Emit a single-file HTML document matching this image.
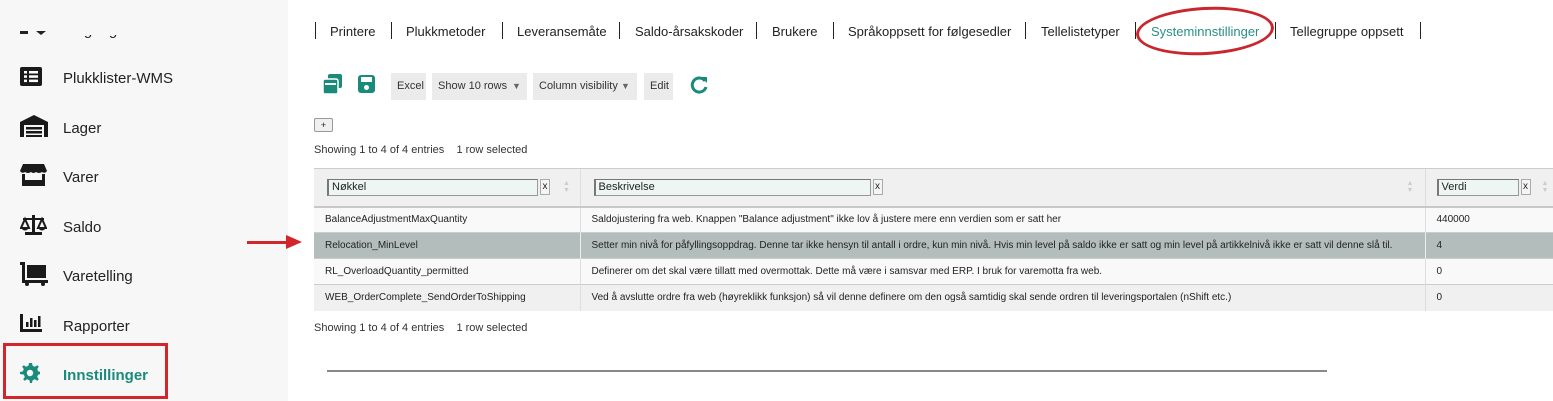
<!DOCTYPE html>
<html><head><meta charset="utf-8"><style>
*{margin:0;padding:0;box-sizing:border-box}
body{width:1553px;height:401px;background:#fff;font-family:"Liberation Sans","DejaVu Sans",sans-serif;position:relative;overflow:hidden;color:#222}
.side{position:absolute;left:0;top:0;width:288px;height:401px;background:#f7f7f7}
.it{position:absolute;left:63px;font-size:15px;color:#222}
.ic{position:absolute;left:20px}
.nav{position:absolute;top:24px;font-size:13px;left:0;width:1553px;height:16px}
.nav span{position:absolute;top:0}
.sep{position:absolute;top:22px;width:1px;height:17px;background:#222}
.btn{position:absolute;top:73px;height:27px;background:#ebebeb;font-size:11px;line-height:27px;padding-left:6px;color:#333}
.tri{position:absolute;top:0;font-size:9px;color:#666}
.small{position:absolute;font-size:11px;color:#333}
table{position:absolute;left:314px;top:168px;border-collapse:collapse;font-size:10px;width:1239px}
td{border-left:1px solid #ddd;padding-left:11px;height:26px;color:#222}
td:first-child{border-left:none}
tr.h td{height:38px;background:#f0f0f0;border-bottom:2px solid #c8c8c8;position:relative}
tr.a td{background:#f9f9f9}
tr.b td{background:#f0f0f0}
tr.s td{background:#b3bebc;border-left-color:#eee}
tr td{border-top:1px solid #ccc}
.inp{display:inline-block;height:17px;border:1px solid #999;border-top-color:#777;border-left:2px solid #777;background:#eef6f3;font-size:11px;padding-left:3px;line-height:15px;vertical-align:middle}
.x{display:inline-block;width:10px;height:16px;border:1px solid #aaa;background:#f4f4f4;font-size:10px;text-align:center;line-height:14px;vertical-align:middle;margin-left:2px}
.sort{position:absolute;top:11px;font-size:7px;color:#ccc;line-height:7px}
</style></head><body>
<div class="side">
 <div class="ic" style="top:31px;width:8px;height:3px;background:#222"></div>
 <div class="ic" style="left:36px;top:31px;width:0;height:0;border-left:5px solid transparent;border-right:5px solid transparent;border-top:4px solid #222"></div>
 <div class="it" style="top:22px;clip-path:inset(13px 0 0 0)">Innganger</div>
 <svg class="ic" style="top:67px" width="22" height="19" viewBox="0 0 22 19"><rect x="0" y="0" width="22" height="19" rx="2" fill="#1a1a1a"/><rect x="4" y="4" width="3" height="2.5" fill="#fff"/><rect x="9" y="4" width="9" height="2.5" fill="#fff"/><rect x="4" y="8.3" width="3" height="2.5" fill="#fff"/><rect x="9" y="8.3" width="9" height="2.5" fill="#fff"/><rect x="4" y="12.6" width="3" height="2.5" fill="#fff"/><rect x="9" y="12.6" width="9" height="2.5" fill="#fff"/></svg>
 <div class="it" style="top:70px">Plukklister-WMS</div>
 <svg class="ic" style="top:115px" width="28" height="22" viewBox="0 0 28 22"><path d="M0 7 L14 0 L28 7 V22 H24 V10 H4 V22 H0Z" fill="#1a1a1a"/><rect x="6" y="12" width="16" height="2.5" fill="#1a1a1a"/><rect x="6" y="16" width="16" height="2.5" fill="#1a1a1a"/><rect x="6" y="20" width="16" height="2" fill="#1a1a1a"/></svg>
 <div class="it" style="top:120px">Lager</div>
 <svg class="ic" style="top:164px" width="27" height="22" viewBox="0 0 27 22"><path d="M3 0 H24 L27 7 Q25 10 22 8 Q19 10 16 8 Q13.5 10 11 8 Q8 10 5 8 Q2 10 0 7Z" fill="#1a1a1a"/><path d="M2 10 V22 H25 V10 H22 V16 H5 V10Z" fill="#1a1a1a"/></svg>
 <div class="it" style="top:169px">Varer</div>
 <svg class="ic" style="top:213px" width="27" height="22" viewBox="0 0 27 22"><path d="M12 2 H15 V19 H22 V22 H5 V19 H12Z M3 5 H24 V7 H3Z" fill="#1a1a1a"/><path d="M5 6 L1 15 H9Z M22 6 L18 15 H26Z" fill="none" stroke="#1a1a1a" stroke-width="2"/><path d="M1 15 Q5 20 9 15Z M18 15 Q22 20 26 15Z" fill="#1a1a1a"/></svg>
 <div class="it" style="top:219px">Saldo</div>
 <svg class="ic" style="top:262px" width="28" height="24" viewBox="0 0 28 24"><path d="M0 0 H5 V18 H28 V21 H2 V3 H0Z" fill="#1a1a1a"/><rect x="7" y="3" width="19" height="13" fill="#1a1a1a"/><circle cx="7" cy="22" r="2" fill="#1a1a1a"/><circle cx="23" cy="22" r="2" fill="#1a1a1a"/></svg>
 <div class="it" style="top:268px">Varetelling</div>
 <svg class="ic" style="top:314px" width="22" height="18" viewBox="0 0 22 18"><path d="M0 0 H3 V15 H22 V18 H0Z" fill="#1a1a1a"/><rect x="6" y="8" width="2.5" height="5" fill="#1a1a1a"/><rect x="10" y="4" width="2.5" height="9" fill="#1a1a1a"/><rect x="14" y="6" width="2.5" height="7" fill="#1a1a1a"/><rect x="18" y="2" width="2.5" height="11" fill="#1a1a1a"/></svg>
 <div class="it" style="top:318px">Rapporter</div>
 <div style="position:absolute;left:3px;top:343px;width:165px;height:56px;border:3px solid #d1262b"></div>
 <svg class="ic" style="top:363px" width="20" height="20" viewBox="0 0 20 20"><path d="M10 0 l2 0 .6 2.8 2.3 1 2.4-1.6 1.5 1.5-1.6 2.4 1 2.3 2.8.6v2l-2.8.6-1 2.3 1.6 2.4-1.5 1.5-2.4-1.6-2.3 1-.6 2.8h-2l-.6-2.8-2.3-1-2.4 1.6-1.5-1.5 1.6-2.4-1-2.3L0 11V9l2.8-.6 1-2.3L2.2 3.7 3.7 2.2 6.1 3.8l2.3-1L9 0Z" fill="#1a8a7a"/><circle cx="10" cy="10" r="3.2" fill="#f7f7f7"/></svg>
 <div class="it" style="top:367px;font-weight:bold;color:#1a8a7a">Innstillinger</div>
</div>

<div class="nav">
 <span style="left:330px">Printere</span><span style="left:406px">Plukkmetoder</span><span style="left:517px">Leveransemåte</span><span style="left:635px">Saldo-årsakskoder</span><span style="left:772px">Brukere</span><span style="left:848px">Språkoppsett for følgesedler</span><span style="left:1041px">Tellelistetyper</span><span style="left:1151px;color:#2a8f84">Systeminnstillinger</span><span style="left:1290px">Tellegruppe oppsett</span>
</div>
<div class="sep" style="left:315px"></div><div class="sep" style="left:391px"></div><div class="sep" style="left:502px"></div><div class="sep" style="left:619px"></div><div class="sep" style="left:756px"></div><div class="sep" style="left:833px"></div><div class="sep" style="left:1025px"></div><div class="sep" style="left:1135px"></div><div class="sep" style="left:1275px"></div><div class="sep" style="left:1420px"></div>
<div style="position:absolute;left:1136px;top:7px;width:138px;height:48px;border:3px solid #c9272d;border-radius:50%;transform:rotate(-3deg)"></div>

<svg style="position:absolute;left:323px;top:74px" width="19" height="20" viewBox="0 0 19 20"><rect x="5" y="0" width="14" height="14" rx="2" fill="#1a8a7a"/><rect x="0" y="5" width="15" height="15" rx="2" fill="#1a8a7a" stroke="#fff" stroke-width="1.5"/><rect x="2" y="9" width="11" height="2" fill="#fff"/></svg>
<svg style="position:absolute;left:358px;top:75px" width="17" height="18" viewBox="0 0 17 18"><rect width="17" height="18" rx="3" fill="#1a8a7a"/><rect x="3" y="2" width="11" height="5" fill="#fff"/><circle cx="8.5" cy="12.5" r="2.5" fill="#fff"/></svg>
<div class="btn" style="left:391px;width:35px">Excel</div>
<div class="btn" style="left:432px;width:95px">Show 10 rows<span class="tri" style="left:80px">▼</span></div>
<div class="btn" style="left:533px;width:104px">Column visibility<span class="tri" style="left:88px">▼</span></div>
<div class="btn" style="left:644px;width:29px">Edit</div>
<svg style="position:absolute;left:690px;top:76px" width="18" height="18" viewBox="0 0 18 18"><path d="M15 5 A7 7 0 1 0 16 11" fill="none" stroke="#1a8a7a" stroke-width="3"/><path d="M11 1 L17 1 L17 7Z" fill="#1a8a7a"/></svg>

<div style="position:absolute;left:314px;top:118px;width:19px;height:14px;border:1px solid #999;background:#f0f0f0;font-size:9px;text-align:center;line-height:12px;border-radius:2px">+</div>
<div class="small" style="left:314px;top:144px">Showing 1 to 4 of 4 entries&nbsp;&nbsp;&nbsp;&nbsp;1 row selected</div>

<table>
<tr class="h"><td style="width:266px"><span class="inp" style="width:211px;margin-left:2px">Nøkkel</span><span class="x">x</span><span class="sort" style="left:249px">▲<br>▼</span></td>
<td style="width:845px"><span class="inp" style="width:277px;margin-left:2px">Beskrivelse</span><span class="x">x</span><span class="sort" style="left:826px">▲<br>▼</span></td>
<td><span class="inp" style="width:82px;margin-left:0">Verdi</span><span class="x">x</span><span class="sort" style="left:116px">▲<br>▼</span></td></tr>
<tr class="a"><td>BalanceAdjustmentMaxQuantity</td><td>Saldojustering fra web. Knappen "Balance adjustment" ikke lov å justere mere enn verdien som er satt her</td><td>440000</td></tr>
<tr class="s"><td>Relocation_MinLevel</td><td>Setter min nivå for påfyllingsoppdrag. Denne tar ikke hensyn til antall i ordre, kun min nivå. Hvis min level på saldo ikke er satt og min level på artikkelnivå ikke er satt vil denne slå til.</td><td>4</td></tr>
<tr class="a"><td>RL_OverloadQuantity_permitted</td><td>Definerer om det skal være tillatt med overmottak. Dette må være i samsvar med ERP. I bruk for varemotta fra web.</td><td>0</td></tr>
<tr class="b"><td>WEB_OrderComplete_SendOrderToShipping</td><td>Ved å avslutte ordre fra web (høyreklikk funksjon) så vil denne definere om den også samtidig skal sende ordren til leveringsportalen (nShift etc.)</td><td>0</td></tr>
</table>
<div class="small" style="left:314px;top:322px">Showing 1 to 4 of 4 entries&nbsp;&nbsp;&nbsp;&nbsp;1 row selected</div>
<div style="position:absolute;left:327px;top:370px;width:1000px;height:2px;background:#888"></div>

<div style="position:absolute;left:247px;top:241px;width:40px;height:3px;background:#d1262b"></div>
<div style="position:absolute;left:286px;top:235px;width:0;height:0;border-left:16px solid #d1262b;border-top:7px solid transparent;border-bottom:7px solid transparent"></div>
</body></html>
